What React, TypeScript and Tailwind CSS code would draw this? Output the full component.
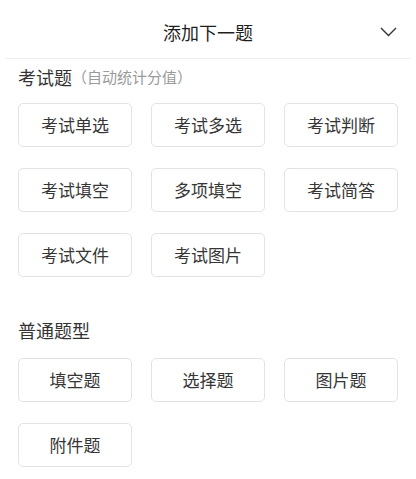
import React from "react";

const exam = ["考试单选", "考试多选", "考试判断", "考试填空", "多项填空", "考试简答", "考试文件", "考试图片"];
const normal = ["填空题", "选择题", "图片题", "附件题"];

function Grid({ items }: { items: string[] }) {
  return (
    <div className="grid grid-cols-3 gap-x-[19px] gap-y-[21px] px-[18px]">
      {items.map((t) => (
        <div
          key={t}
          className="h-[44px] flex items-center justify-center rounded-[5px] border border-[#e3e3e3] bg-white text-[17px] text-[#363636]"
        >
          {t}
        </div>
      ))}
    </div>
  );
}

export default function App() {
  return (
    <div
      className="w-[416px] h-[479px] bg-white overflow-hidden"
      style={{ fontFamily: '"Noto Sans CJK SC", "Noto Sans", sans-serif' }}
    >
      <div className="mx-[5px] h-[59px] border-b border-[#eeeeee] grid grid-cols-[1fr_auto_1fr] items-center pt-[6px]">
        <div />
        <div className="text-[18px] text-[#1f1f1f] leading-[26px]">添加下一题</div>
        <div className="flex justify-end pr-[14px]">
          <svg width="17" height="10" viewBox="0 0 17 10" fill="none">
            <polyline points="1,1 8.5,8.5 16,1" stroke="#333" strokeWidth="1.4" />
          </svg>
        </div>
      </div>
      <div className="mt-[6px] px-[18px] h-[24px] flex items-center">
        <span className="text-[18px] text-[#333333]">考试题</span>
        <span className="text-[15px] text-[#9a9a9a]">（自动统计分值）</span>
      </div>
      <div className="mt-[14px]">
        <Grid items={exam} />
      </div>
      <div className="mt-[41px] px-[18px] h-[24px] flex items-center">
        <span className="text-[18px] text-[#333333]">普通题型</span>
      </div>
      <div className="mt-[16px]">
        <Grid items={normal} />
      </div>
    </div>
  );
}
